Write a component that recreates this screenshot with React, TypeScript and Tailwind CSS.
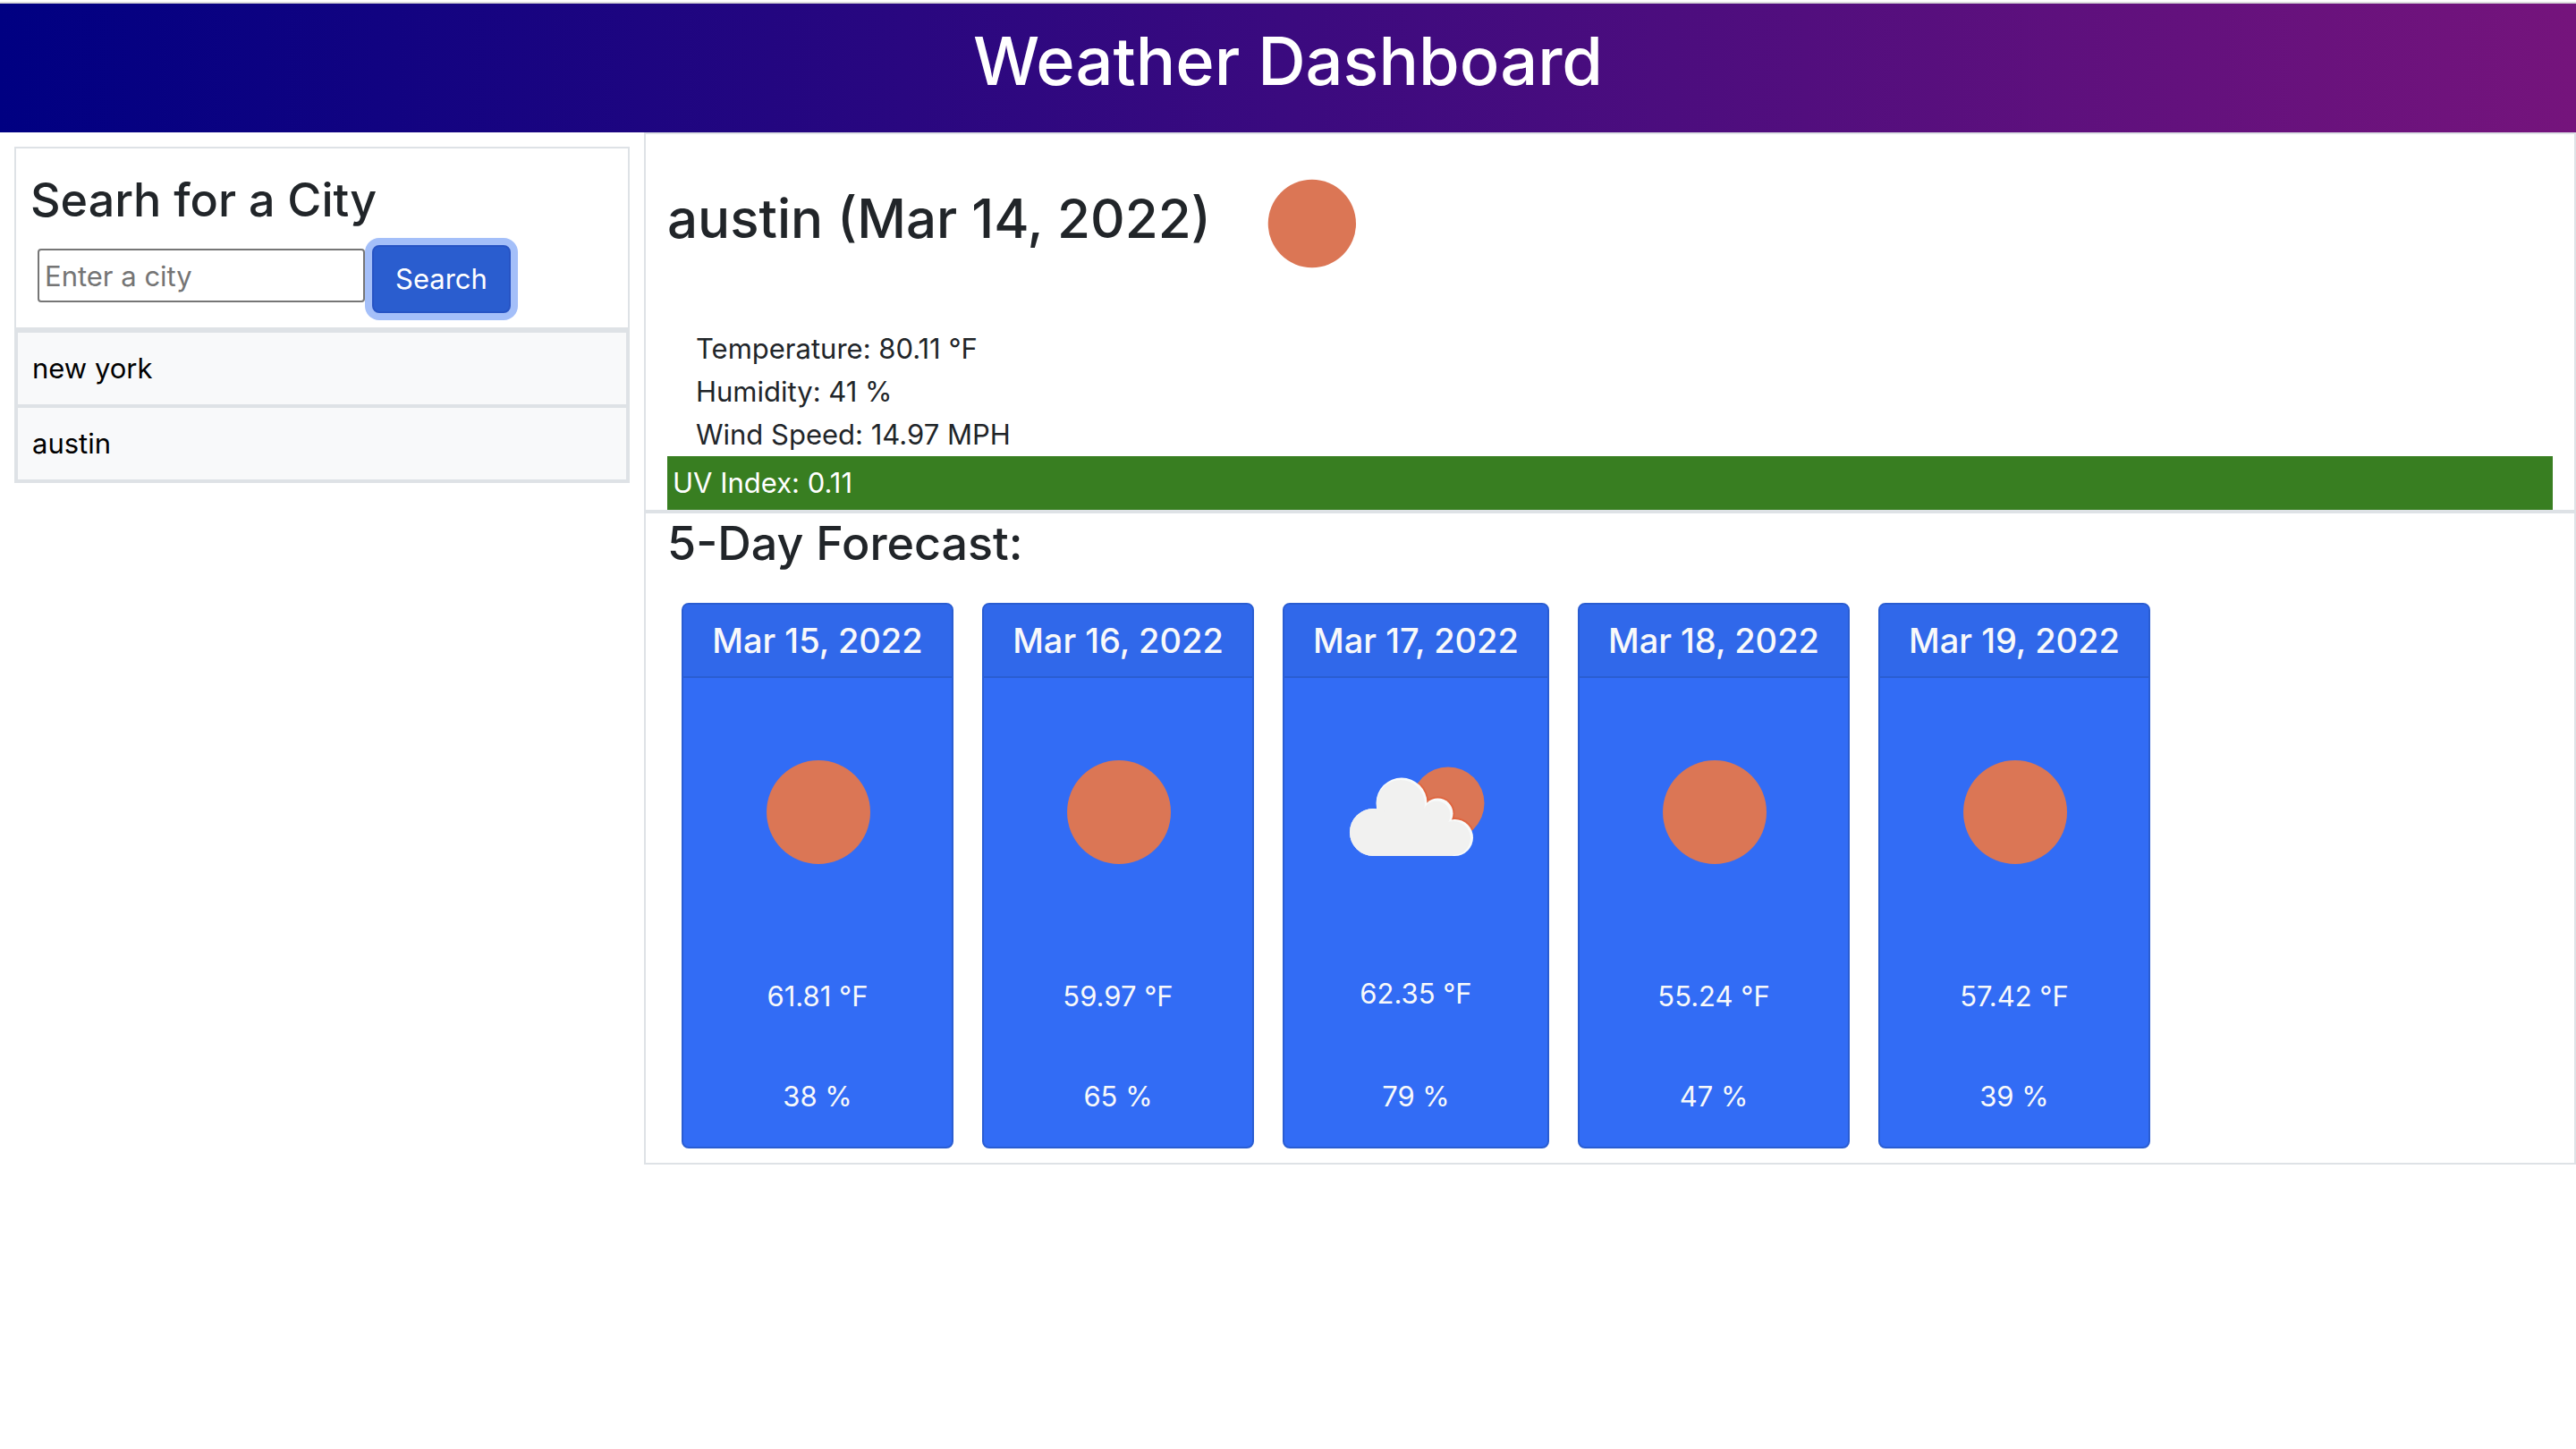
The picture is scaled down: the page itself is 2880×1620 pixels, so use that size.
type Sky = "clear" | "clouds";

interface Day {
  date: string;
  sky: Sky;
  temp: string;
  humidity: string;
}

const days: Day[] = [
  { date: "Mar 15, 2022", sky: "clear", temp: "61.81", humidity: "38" },
  { date: "Mar 16, 2022", sky: "clear", temp: "59.97", humidity: "65" },
  { date: "Mar 17, 2022", sky: "clouds", temp: "62.35", humidity: "79" },
  { date: "Mar 18, 2022", sky: "clear", temp: "55.24", humidity: "47" },
  { date: "Mar 19, 2022", sky: "clear", temp: "57.42", humidity: "39" },
];

const history = ["new york", "austin"];

function CloudShape() {
  return (
    <>
      <circle cx="99" cy="108" r="28.5" />
      <circle cx="67.5" cy="140.5" r="26.5" />
      <circle cx="139.5" cy="119.5" r="17" />
      <circle cx="158.5" cy="146.5" r="20.5" />
      <path d="M67.5 125 L99 100 L139.5 118 L158.5 146 V167 H67.5 Z" />
    </>
  );
}

function SkyIcon({ sky, className }: { sky: Sky; className: string }) {
  if (sky === "clear") {
    return (
      <svg viewBox="0 0 230 230" className={className} role="img" aria-label="Clear sky">
        <circle cx="116" cy="115" r="56.5" fill="#db7655" />
      </svg>
    );
  }
  return (
    <svg viewBox="0 0 230 230" className={className} role="img" aria-label="Partly cloudy">
      <defs>
        <clipPath id="sun-disc">
          <circle cx="151" cy="108" r="40.5" />
        </clipPath>
      </defs>
      <circle cx="151" cy="108" r="40.5" fill="#db7655" />
      <g clipPath="url(#sun-disc)" fill="none" stroke="#df6640" strokeWidth="4">
        <CloudShape />
      </g>
      <g fill="#f8fbfb">
        <CloudShape />
      </g>
      <g fill="#f1f1f0">
        <circle cx="98" cy="109" r="27" />
        <circle cx="138" cy="121" r="15.5" />
        <circle cx="157" cy="147" r="19" />
        <circle cx="67.5" cy="140.5" r="26.5" />
        <path d="M67.5 125 L99 104 L136 122 L156 146 V167 H67.5 Z" />
      </g>
    </svg>
  );
}

function ForecastCard({ day }: { day: Day }) {
  const width = day.sky === "clear" ? "w-[304px]" : "w-[298px]";
  return (
    <article
      className={`${width} flex flex-col overflow-hidden rounded-lg border-2 border-[#2a5dd2] bg-[#326cf5] text-center text-[#f8f9fa]`}
    >
      <h3 className="border-b-2 border-[#2a5dd2] bg-[#3068ea] py-4 text-[38px] leading-[48px] font-medium whitespace-nowrap">
        {day.date}
      </h3>
      <div className="flex grow flex-col justify-between p-8">
        <SkyIcon sky={day.sky} className="aspect-square w-full" />
        <p className="mt-16">{day.temp} °F</p>
        <p className="mt-16">{day.humidity} %</p>
      </div>
    </article>
  );
}

export default function App() {
  return (
    <div className="bg-white pt-0.5 font-['Inter',sans-serif] text-[31px] leading-[48px] text-[#212529]">
      <header className="border-t-2 border-[#dcdcdc] bg-[linear-gradient(to_right,#000082,#75147c)] pt-4 pb-8 text-center text-white">
        <h1 className="text-[74px] leading-[96px] font-medium">Weather Dashboard</h1>
      </header>

      <div className="flex items-start">
        <aside className="w-1/4 px-4 pt-4">
          <form
            className="border-2 border-[#dee2e6] px-4 pt-6 pb-4"
            onSubmit={(e) => e.preventDefault()}
          >
            <h2 className="mb-4 text-[52px] leading-[68px] font-medium">Searh for a City</h2>
            <div className="flex items-start">
              <input
                type="text"
                aria-label="City"
                placeholder="Enter a city"
                className="mx-2 mt-1 h-[60px] w-[366px] rounded border-2 border-[#767676] px-1.5 placeholder:text-[#757575]"
              />
              <button
                type="submit"
                className="rounded-lg border-2 border-[#2754c4] bg-[#2a5dcf] px-6 py-3 text-white shadow-[0_0_0_8px_#a4bff9]"
              >
                Search
              </button>
            </div>
          </form>
          <ul className="border-2 border-[#dee2e6]">
            {history.map((city) => (
              <li key={city}>
                <button
                  type="button"
                  className="block w-full border-2 border-[#dee2e6] bg-[#f8f9fa] p-4 text-left text-black"
                >
                  {city}
                </button>
              </li>
            ))}
          </ul>
        </aside>

        <main className="w-3/4">
          <section className="border-2 border-[#dee2e6] px-6">
            <div className="flex items-start gap-3">
              <h2 className="pt-14 text-[60px] leading-[76px] font-medium">austin (Mar 14, 2022)</h2>
              <SkyIcon sky="clear" className="size-[200px]" />
            </div>
            <ul className="px-8 pt-4">
              <li>Temperature: 80.11 °F</li>
              <li>Humidity: 41 %</li>
              <li>Wind Speed: 14.97 MPH</li>
            </ul>
            <p className="bg-[#387e21] p-1.5 text-white">UV Index: 0.11</p>
          </section>
          <section className="border-2 border-[#dee2e6] px-6 pb-4">
            <h2 className="text-[52px] leading-[68px] font-medium">5-Day Forecast:</h2>
            <div className="flex flex-wrap gap-8 px-4 pt-8">
              {days.map((day) => (
                <ForecastCard key={day.date} day={day} />
              ))}
            </div>
          </section>
        </main>
      </div>
    </div>
  );
}
